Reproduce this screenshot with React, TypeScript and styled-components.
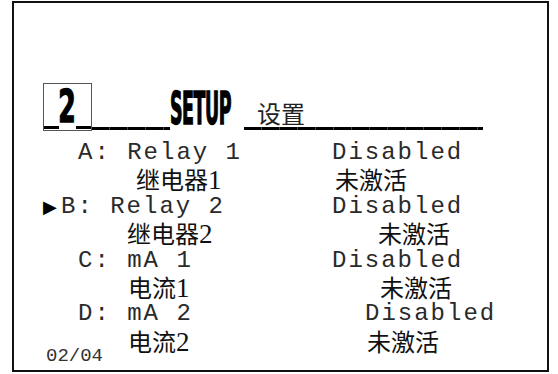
import styled, { createGlobalStyle } from "styled-components";

type Line = {
  left: string;
  leftIndent: number;
  right: string;
  rightIndent: number;
  cjk?: boolean;
  selected?: boolean;
};

const lines: Line[] = [
  { left: "A: Relay 1", leftIndent: 64, right: "Disabled", rightIndent: 2 },
  { left: "继电器1", leftIndent: 122, right: "未激活", rightIndent: 5, cjk: true },
  { left: "B: Relay 2", leftIndent: 29, right: "Disabled", rightIndent: 2, selected: true },
  { left: "继电器2", leftIndent: 113, right: "未激活", rightIndent: 48, cjk: true },
  { left: "C: mA 1", leftIndent: 64, right: "Disabled", rightIndent: 2 },
  { left: "电流1", leftIndent: 114, right: "未激活", rightIndent: 50, cjk: true },
  { left: "D: mA 2", leftIndent: 64, right: "Disabled", rightIndent: 35 },
  { left: "电流2", leftIndent: 114, right: "未激活", rightIndent: 37, cjk: true },
];

// 中文行末尾的数字用大一号的衬线体
const renderCjk = (text: string) => {
  const m = text.match(/^(.*?)(\d+)$/);
  if (!m) return text;
  return (
    <>
      {m[1]}
      <Num>{m[2]}</Num>
    </>
  );
};

const App = () => {
  return (
    <>
      <GlobalStyle />
      <Screen>
        {/* 标题栏 */}
        <Header>
          <NumberBox>
            <Digit>2</Digit>
          </NumberBox>
          <Dashes $width={78} />
          <Title>
            <TitleText>SETUP</TitleText>
          </Title>
          <Gap />
          <Dashes $width={239}>
            <TitleCn>设置</TitleCn>
          </Dashes>
        </Header>

        {/* 通道列表 */}
        <List>
          {lines.map((line, i) => (
            <Row key={i} $cjk={line.cjk}>
              <LeftCell $indent={line.leftIndent}>
                {line.selected && <Marker>▶</Marker>}
                {line.cjk ? renderCjk(line.left) : line.left}
              </LeftCell>
              <RightCell $indent={line.rightIndent}>{line.right}</RightCell>
            </Row>
          ))}
        </List>

        <PageNo>02/04</PageNo>
      </Screen>
    </>
  );
};

const GlobalStyle = createGlobalStyle`
  html, body {
    margin: 0;
    padding: 0;
    background: #ffffff;
  }
`;

/** 外框 */
const Screen = styled.div`
  position: relative;
  box-sizing: border-box;
  width: 537px;
  height: 371px;
  margin: 1px 0 0 12px;
  border: 2px solid #111;
  background: #fff;
  padding: 80px 0 0 29px;
`;

/** 标题行 */
const Header = styled.div`
  display: flex;
  align-items: flex-end;
  height: 48px;
`;

const NumberBox = styled.div`
  box-sizing: border-box;
  width: 49px;
  height: 48px;
  border: 1px solid #555;
  display: flex;
  align-items: flex-end;
  justify-content: center;
  background: linear-gradient(
      to right,
      #000 0 15px,
      transparent 15px 32px,
      #000 32px
    )
    no-repeat left bottom 1px / 100% 3px;
`;

const Digit = styled.span`
  display: inline-block;
  font-family: "DejaVu Sans Condensed", "DejaVu Sans", sans-serif;
  font-weight: bold;
  font-size: 45px;
  line-height: 38px;
  height: 38px;
  color: #000;
  -webkit-text-stroke: 1.4px #000;
  transform: scaleX(0.62);
  margin-bottom: 4px;
`;

/** 分段下划线 */
const Dashes = styled.div<{ $width: number }>`
  position: relative;
  width: ${(p) => p.$width}px;
  height: 48px;
  background: repeating-linear-gradient(
      to right,
      #000 0 17px,
      #444 17px 18px
    )
    no-repeat left bottom 1px / 100% 3px;
`;

const Title = styled.div`
  width: 60px;
  height: 48px;
  display: flex;
  align-items: flex-end;
`;

const TitleText = styled.span`
  display: inline-block;
  font-family: "DejaVu Sans Condensed", "DejaVu Sans", sans-serif;
  font-weight: bold;
  font-size: 44px;
  line-height: 38px;
  height: 38px;
  color: #000;
  letter-spacing: -1px;
  -webkit-text-stroke: 1.4px #000;
  transform: scaleX(0.44);
  transform-origin: left center;
  margin-bottom: 3px;
  white-space: nowrap;
`;

const Gap = styled.div`
  width: 14px;
`;

const TitleCn = styled.span`
  position: absolute;
  left: 13px;
  bottom: 5px;
  font-family: "Noto Sans CJK SC", sans-serif;
  font-size: 24px;
  line-height: 26px;
  color: #222;
`;

/** 列表 */
const List = styled.div`
  margin: 8px 0 0 -29px;
`;

const Row = styled.div<{ $cjk?: boolean }>`
  display: grid;
  grid-template-columns: 316px 1fr;
  height: 27.4px;
  line-height: 27px;
  white-space: pre;
  color: ${(p) => (p.$cjk ? "#111" : "#2a2a2a")};
  font-size: 24px;
  font-family: ${(p) =>
    p.$cjk
      ? `"Noto Sans CJK SC", sans-serif`
      : `"Liberation Mono", monospace`};
  letter-spacing: ${(p) => (p.$cjk ? 0 : 2)}px;
  margin-top: ${(p) => (p.$cjk ? -1 : 0)}px;
  margin-bottom: ${(p) => (p.$cjk ? 0 : 0)}px;
`;

const LeftCell = styled.div<{ $indent: number }>`
  padding-left: ${(p) => p.$indent}px;
`;

const RightCell = styled.div<{ $indent: number }>`
  padding-left: ${(p) => p.$indent}px;
`;

const Num = styled.span`
  font-family: "Liberation Serif", serif;
  font-size: 27px;
  line-height: 27px;
`;

const Marker = styled.span`
  display: inline-block;
  width: 18px;
  font-family: "DejaVu Sans", sans-serif;
  font-size: 18px;
  letter-spacing: 0;
  color: #000;
`;

/** 页码 */
const PageNo = styled.div`
  position: absolute;
  left: 32px;
  bottom: 4px;
  font-family: "Liberation Mono", monospace;
  font-size: 19px;
  line-height: 20px;
  color: #333;
`;

export default App;
